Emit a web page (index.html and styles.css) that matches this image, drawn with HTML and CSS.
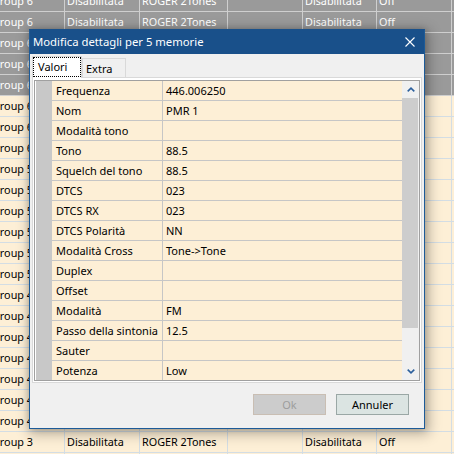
FILE: index.html
```html
<!DOCTYPE html>
<html>
<head>
  <meta charset="utf-8">
  <title>Modifica dettagli per 5 memorie</title>
  <link rel="stylesheet" href="styles.css">
</head>
<body>
  <div class="list">
    <div class="list-row sel"><div>Group 6</div><div>Disabilitata</div><div>ROGER 2Tones</div><div></div><div>Disabilitata</div><div>Off</div><div></div></div>
    <div class="list-row sel"><div>Group 6</div><div>Disabilitata</div><div>ROGER 2Tones</div><div></div><div>Disabilitata</div><div>Off</div><div></div></div>
    <div class="list-row sel"><div>Group 6</div><div>Disabilitata</div><div>ROGER 2Tones</div><div></div><div>Disabilitata</div><div>Off</div><div></div></div>
    <div class="list-row sel"><div>Group 6</div><div>Disabilitata</div><div>ROGER 2Tones</div><div></div><div>Disabilitata</div><div>Off</div><div></div></div>
    <div class="list-row sel"><div>Group 6</div><div>Disabilitata</div><div>ROGER 2Tones</div><div></div><div>Disabilitata</div><div>Off</div><div></div></div>
    <div class="list-row"><div>Group 6</div><div>Disabilitata</div><div>ROGER 2Tones</div><div></div><div>Disabilitata</div><div>Off</div><div></div></div>
    <div class="list-row"><div>Group 6</div><div>Disabilitata</div><div>ROGER 2Tones</div><div></div><div>Disabilitata</div><div>Off</div><div></div></div>
    <div class="list-row"><div>Group 6</div><div>Disabilitata</div><div>ROGER 2Tones</div><div></div><div>Disabilitata</div><div>Off</div><div></div></div>
    <div class="list-row"><div>Group 5</div><div>Disabilitata</div><div>ROGER 2Tones</div><div></div><div>Disabilitata</div><div>Off</div><div></div></div>
    <div class="list-row"><div>Group 5</div><div>Disabilitata</div><div>ROGER 2Tones</div><div></div><div>Disabilitata</div><div>Off</div><div></div></div>
    <div class="list-row"><div>Group 5</div><div>Disabilitata</div><div>ROGER 2Tones</div><div></div><div>Disabilitata</div><div>Off</div><div></div></div>
    <div class="list-row"><div>Group 5</div><div>Disabilitata</div><div>ROGER 2Tones</div><div></div><div>Disabilitata</div><div>Off</div><div></div></div>
    <div class="list-row"><div>Group 5</div><div>Disabilitata</div><div>ROGER 2Tones</div><div></div><div>Disabilitata</div><div>Off</div><div></div></div>
    <div class="list-row"><div>Group 5</div><div>Disabilitata</div><div>ROGER 2Tones</div><div></div><div>Disabilitata</div><div>Off</div><div></div></div>
    <div class="list-row"><div>Group 4</div><div>Disabilitata</div><div>ROGER 2Tones</div><div></div><div>Disabilitata</div><div>Off</div><div></div></div>
    <div class="list-row"><div>Group 4</div><div>Disabilitata</div><div>ROGER 2Tones</div><div></div><div>Disabilitata</div><div>Off</div><div></div></div>
    <div class="list-row"><div>Group 4</div><div>Disabilitata</div><div>ROGER 2Tones</div><div></div><div>Disabilitata</div><div>Off</div><div></div></div>
    <div class="list-row"><div>Group 4</div><div>Disabilitata</div><div>ROGER 2Tones</div><div></div><div>Disabilitata</div><div>Off</div><div></div></div>
    <div class="list-row"><div>Group 4</div><div>Disabilitata</div><div>ROGER 2Tones</div><div></div><div>Disabilitata</div><div>Off</div><div></div></div>
    <div class="list-row"><div>Group 4</div><div>Disabilitata</div><div>ROGER 2Tones</div><div></div><div>Disabilitata</div><div>Off</div><div></div></div>
    <div class="list-row"><div>Group 4</div><div>Disabilitata</div><div>ROGER 2Tones</div><div></div><div>Disabilitata</div><div>Off</div><div></div></div>
    <div class="list-row"><div>Group 3</div><div>Disabilitata</div><div>ROGER 2Tones</div><div></div><div>Disabilitata</div><div>Off</div><div></div></div>
    <div class="list-row"><div>Group 3</div><div>Disabilitata</div><div>ROGER 2Tones</div><div></div><div>Disabilitata</div><div>Off</div><div></div></div>
  </div>

  <div class="dialog">
    <div class="titlebar">
      <span>Modifica dettagli per 5 memorie</span>
      <svg class="close" width="10" height="10" viewBox="0 0 10 10">
        <path d="M0.5 0.5 L9.5 9.5 M9.5 0.5 L0.5 9.5" stroke="#fff" stroke-width="1.1" fill="none"/>
      </svg>
    </div>
    <div class="dialog-body">
      <div class="tabs">
        <div class="tab active"><span>Valori</span></div>
        <div class="tab">Extra</div>
      </div>
      <div class="page">
        <div class="grid">
          <div class="grid-hdr"></div>
          <div class="grid-rows">
            <div class="grow"><div class="key">Frequenza</div><div class="val">446.006250</div></div>
            <div class="grow"><div class="key">Nom</div><div class="val">PMR 1</div></div>
            <div class="grow"><div class="key">Modalità tono</div><div class="val"></div></div>
            <div class="grow"><div class="key">Tono</div><div class="val">88.5</div></div>
            <div class="grow"><div class="key">Squelch del tono</div><div class="val">88.5</div></div>
            <div class="grow"><div class="key">DTCS</div><div class="val">023</div></div>
            <div class="grow"><div class="key">DTCS RX</div><div class="val">023</div></div>
            <div class="grow"><div class="key">DTCS Polarità</div><div class="val">NN</div></div>
            <div class="grow"><div class="key">Modalità Cross</div><div class="val">Tone-&gt;Tone</div></div>
            <div class="grow"><div class="key">Duplex</div><div class="val"></div></div>
            <div class="grow"><div class="key">Offset</div><div class="val"></div></div>
            <div class="grow"><div class="key">Modalità</div><div class="val">FM</div></div>
            <div class="grow"><div class="key">Passo della sintonia</div><div class="val">12.5</div></div>
            <div class="grow"><div class="key">Sauter</div><div class="val"></div></div>
            <div class="grow"><div class="key">Potenza</div><div class="val">Low</div></div>
          </div>
          <div class="scrollbar">
            <div class="sb-btn">
              <svg width="8" height="5" viewBox="0 0 8 5"><path d="M0.7 4.3 L4 1.2 L7.3 4.3" stroke="#2b5f9c" stroke-width="1.6" fill="none"/></svg>
            </div>
            <div class="sb-thumb"></div>
            <div class="sb-track"></div>
            <div class="sb-btn">
              <svg width="8" height="5" viewBox="0 0 8 5"><path d="M0.7 0.7 L4 3.8 L7.3 0.7" stroke="#2b5f9c" stroke-width="1.6" fill="none"/></svg>
            </div>
          </div>
        </div>
      </div>
      <div class="buttons">
        <button class="btn" disabled>Ok</button>
        <button class="btn default">Annuler</button>
      </div>
    </div>
  </div>
</body>
</html>
```

FILE: styles.css
```css
body {
  margin: 0;
  height: 454px;
  overflow: hidden;
  background: #fdefd6;
  font-family: "Noto Sans", "Open Sans", sans-serif;
  color: #000;
}

/* list behind the dialog */
.list {
  margin: -9px 0 0 -10px;
  font-size: 10.8px;
}
.list-row {
  display: grid;
  grid-template-columns: 75px 75px 88px 75px 74px 75px 1fr;
  height: 21px;
}
.list-row div {
  box-sizing: border-box;
  border-right: 1px solid #d3dde4;
  border-bottom: 1px solid #d3dde4;
  padding-left: 2px;
  line-height: 20px;
  white-space: nowrap;
  overflow: hidden;
}
.list-row.sel {
  background: #9a9a9a;
  color: #fff;
}
.list-row.sel div {
  border-color: #cfcfcf;
}

/* dialog */
.dialog {
  position: absolute;
  left: 29px;
  top: 29px;
  width: 396px;
  height: 400px;
  box-sizing: border-box;
  border: 1px solid #1d5b98;
  border-top-color: #19508a;
  background: #f0f0f0;
  display: flex;
  flex-direction: column;
  box-shadow: 0 0 6px rgba(0,0,0,0.18), 2px 3px 12px 2px rgba(0,0,0,0.28);
}
.titlebar {
  height: 24px;
  background: #19508a;
  color: #fff;
  font-size: 11.3px;
  line-height: 24px;
  display: flex;
  align-items: center;
  justify-content: space-between;
  padding: 0 9px 0 3px;
}
.dialog-body {
  flex: 1;
  display: flex;
  flex-direction: column;
  padding: 2px 2px 0 2px;
  font-size: 11px;
}

.tabs {
  display: flex;
  align-items: flex-end;
  height: 21px;
}
.tab {
  box-sizing: border-box;
  height: 19px;
  width: 44px;
  border: 1px solid #d9d9d9;
  border-bottom: none;
  background: #f0f0f0;
  padding-left: 3px;
  line-height: 19px;
}
.tab.active {
  position: relative;
  z-index: 1;
  width: 50px;
  height: 22px;
  margin-bottom: -1px;
  background: #fff;
  padding: 0;
}
.tab.active span {
  display: block;
  box-sizing: border-box;
  height: 20px;
  border: 1px dotted #000;
  padding-left: 4px;
  line-height: 17px;
}

.page {
  flex: none;
  height: 306px;
  box-sizing: border-box;
  border: 1px solid #d9d9d9;
  background: #fff;
  padding: 2px 1px 1px 1px;
  display: flex;
}
.grid {
  flex: 1;
  display: flex;
  border: 1px solid #a0a0a0;
  background: #fdefd6;
  overflow: hidden;
}
.grid-hdr {
  width: 16px;
  border-left: 1px solid #fff;
  background: #c8c8c8;
}
.grid-rows {
  flex: 1;
  overflow: hidden;
}
.grow {
  display: grid;
  grid-template-columns: 111px 1fr;
  height: 20px;
}
.grow div {
  box-sizing: border-box;
  border-bottom: 1px solid #c6c6c6;
  line-height: 19px;
  white-space: nowrap;
}
.grow .key {
  border-right: 1px solid #c6c6c6;
  padding-left: 4px;
}
.grow .val {
  padding-left: 3px;
}

.scrollbar {
  width: 17px;
  display: flex;
  flex-direction: column;
  background: #f0f0f0;
}
.sb-btn {
  height: 17px;
  display: flex;
  align-items: center;
  justify-content: center;
}
.sb-thumb {
  height: 230px;
  margin-right: 1px;
  background: #cdcdcd;
}
.sb-track {
  flex: 1;
}

.buttons {
  display: flex;
  justify-content: flex-end;
  gap: 10px;
  padding: 11px 13px 0 0;
}
.btn {
  width: 73px;
  height: 21px;
  box-sizing: border-box;
  font-family: "Noto Sans", "Open Sans", sans-serif;
  font-size: 11px;
  padding: 0;
  border: 1px solid #adadad;
  background: #e1e1e1;
  color: #000;
}
.btn:disabled {
  background: #cccccc;
  border-color: #c9beb3;
  color: #9d9d9d;
}
.btn.default {
  background: #dbe4e2;
  border-color: #9aa7a5;
}
```
